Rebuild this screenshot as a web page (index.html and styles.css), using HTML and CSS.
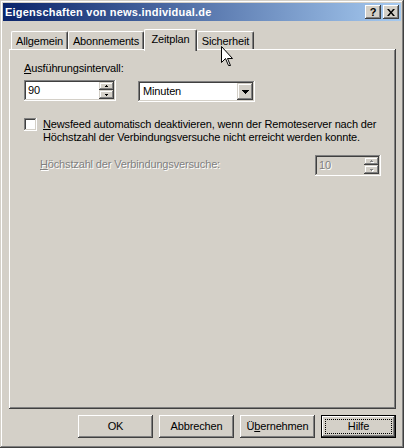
FILE: index.html
```html
<!DOCTYPE html>
<html lang="de">
<head>
    <meta charset="UTF-8">
    <title>Eigenschaften von news.individual.de</title>
    <link rel="stylesheet" href="styles.css">
</head>
<body>
    <div class="window">
        <div class="titlebar">
            <span class="title">Eigenschaften von news.individual.de</span>
            <div class="caption-buttons">
                <div class="caption-btn">?</div>
                <div class="caption-btn">
                    <svg width="8" height="7" viewBox="0 0 8 7"><path d="M0 0h2l2 2.5 2-2.5h2l-3 3.5 3 3.5h-2l-2-2.5-2 2.5h-2l3-3.5z"/></svg>
                </div>
            </div>
        </div>
        <div class="dialog">
            <div class="tabs">
                <div class="tab tab-general">Allgemein</div>
                <div class="tab tab-subs">Abonnements</div>
                <div class="tab tab-schedule tab-active">Zeitplan</div>
                <div class="tab tab-security">Sicherheit</div>
            </div>
            <div class="panel">
                <div class="label"><u>A</u>usführungsintervall:</div>
                <div class="interval-row">
                    <div class="spin spin-interval">
                        <span class="spin-value">90</span>
                        <div class="spin-buttons">
                            <div class="spin-btn spin-up"><svg width="3" height="2" viewBox="0 0 3 2"><path d="M1 0h1v1h1v1H0V1h1z"/></svg></div>
                            <div class="spin-btn spin-down"><svg width="3" height="2" viewBox="0 0 3 2"><path d="M0 0h3v1H2v1H1V1H0z"/></svg></div>
                        </div>
                    </div>
                    <div class="combo">
                        <span class="combo-value">Minuten</span>
                        <div class="combo-btn"><svg width="7" height="4" viewBox="0 0 7 4"><path d="M0 0h7v1H6v1H5v1H4v1H3V3H2V2H1V1H0z"/></svg></div>
                    </div>
                </div>
                <div class="check-row">
                    <div class="checkbox"></div>
                    <div class="check-label"><u>N</u>ewsfeed automatisch deaktivieren, wenn der Remoteserver nach der<br>Höchstzahl der Verbindungsversuche nicht erreicht werden konnte.</div>
                </div>
                <div class="retry-row">
                    <div class="retry-label disabled"><u>H</u>öchstzahl der Verbindungsversuche:</div>
                    <div class="spin spin-retry">
                        <span class="spin-value disabled">10</span>
                        <div class="spin-buttons">
                            <div class="spin-btn spin-up"><svg class="arrow-disabled" width="3" height="2" viewBox="0 0 3 2"><path d="M1 0h1v1h1v1H0V1h1z"/></svg></div>
                            <div class="spin-btn spin-down"><svg class="arrow-disabled" width="3" height="2" viewBox="0 0 3 2"><path d="M0 0h3v1H2v1H1V1H0z"/></svg></div>
                        </div>
                    </div>
                </div>
            </div>
            <div class="buttons">
                <button class="button">OK</button>
                <button class="button">Abbrechen</button>
                <button class="button">Ü<u>b</u>ernehmen</button>
                <button class="button button-default"><span class="focus">Hilfe</span></button>
            </div>
        </div>
        <svg class="cursor" width="13" height="21" viewBox="0 0 13 21">
            <path d="M0.5 0.5V16.5L4.5 12.5L7.5 19.5H9.5L6.5 12.5H11.5Z" fill="#fff" stroke="#000" stroke-linejoin="miter"/>
        </svg>
    </div>
</body>
</html>
```

FILE: styles.css
```css
body {
    margin: 0;
    background-color: #d4d0c8;
    font-family: "Liberation Sans", Arial, sans-serif;
    font-size: 11px;
    line-height: 13px;
    letter-spacing: -0.15px;
    color: #000;
}
.window {
    position: relative;
    width: 404px;
    height: 448px;
    box-sizing: border-box;
    padding: 3px;
    display: flex;
    flex-direction: column;
    background-color: #d4d0c8;
    box-shadow: inset -1px -1px #404040, inset 1px 1px #d4d0c8, inset -2px -2px #808080, inset 2px 2px #fff;
}
.titlebar {
    height: 18px;
    display: flex;
    align-items: flex-start;
    background: linear-gradient(to right, #0a246a, #a6caf0);
}
.title {
    flex: 1;
    padding: 1px 0 0 2px;
    line-height: 17px;
    font-weight: bold;
    letter-spacing: 0.22px;
    color: #fff;
    white-space: nowrap;
}
.caption-buttons {
    display: flex;
    gap: 2px;
    margin: 2px 2px 0 0;
}
.caption-btn {
    width: 16px;
    height: 14px;
    display: flex;
    align-items: center;
    justify-content: center;
    background-color: #d4d0c8;
    font-weight: bold;
    line-height: 14px;
    box-shadow: inset -1px -1px #404040, inset 1px 1px #fff, inset -2px -2px #808080, inset 2px 2px #d4d0c8;
}
.dialog {
    flex: 1;
    display: flex;
    flex-direction: column;
    padding: 8px 5px 7px 6px;
}
.tabs {
    display: flex;
    align-items: flex-end;
    height: 20px;
    padding-left: 2px;
}
.tab {
    height: 18px;
    box-sizing: border-box;
    padding-top: 3px;
    text-align: center;
    white-space: nowrap;
    background-color: #d4d0c8;
    border-top: 1px solid #fff;
    border-left: 1px solid #fff;
    border-right: 1px solid #404040;
    border-radius: 2px 2px 0 0;
    box-shadow: inset -1px 0 #808080;
}
.tab-general { width: 57px; }
.tab-subs { width: 76px; }
.tab-schedule { width: 53px; }
.tab-security { width: 57px; }
.tab-active {
    height: 22px;
    margin-bottom: -2px;
    position: relative;
    z-index: 1;
}
.panel {
    flex: 1;
    padding: 13px 15px 0 15px;
    box-shadow: inset -1px -1px #404040, inset 1px 1px #fff, inset -2px -2px #808080, inset 2px 2px #d4d0c8;
}
.interval-row {
    display: flex;
    align-items: flex-start;
    margin-top: 5px;
}
.spin {
    display: flex;
    box-sizing: border-box;
    height: 21px;
    padding: 2px;
    background-color: #fff;
    box-shadow: inset -1px -1px #fff, inset 1px 1px #808080, inset -2px -2px #d4d0c8, inset 2px 2px #404040;
}
.spin-interval {
    width: 92px;
}
.spin-value {
    flex: 1;
    padding: 2px 0 0 2px;
}
.spin-buttons {
    display: flex;
    flex-direction: column;
    width: 15px;
}
.spin-btn {
    display: flex;
    align-items: center;
    justify-content: center;
    background-color: #d4d0c8;
    box-shadow: inset -1px -1px #404040, inset 1px 1px #d4d0c8, inset -2px -2px #808080, inset 2px 2px #fff;
}
.spin-up { height: 8px; }
.spin-down { height: 9px; }
.combo {
    display: flex;
    box-sizing: border-box;
    width: 117px;
    height: 21px;
    margin: 1px 0 0 22px;
    padding: 2px;
    background-color: #fff;
    box-shadow: inset -1px -1px #fff, inset 1px 1px #808080, inset -2px -2px #d4d0c8, inset 2px 2px #404040;
}
.combo-value {
    flex: 1;
    padding: 2px 0 0 3px;
}
.combo-btn {
    width: 16px;
    display: flex;
    align-items: center;
    justify-content: center;
    background-color: #d4d0c8;
    box-shadow: inset -1px -1px #404040, inset 1px 1px #d4d0c8, inset -2px -2px #808080, inset 2px 2px #fff;
}
.check-row {
    display: flex;
    align-items: flex-start;
    margin-top: 16px;
}
.checkbox {
    width: 13px;
    height: 13px;
    margin-right: 6px;
    flex-shrink: 0;
    background-color: #fff;
    box-shadow: inset -1px -1px #fff, inset 1px 1px #808080, inset -2px -2px #d4d0c8, inset 2px 2px #404040;
}
.check-label {
    white-space: nowrap;
}
.retry-row {
    display: flex;
    align-items: flex-start;
    margin-top: 11px;
    padding-left: 16px;
}
.retry-label {
    margin-top: 3px;
}
.spin-retry {
    width: 66px;
    margin-left: auto;
    background-color: #d4d0c8;
}
.disabled {
    color: #808080;
    text-shadow: 1px 1px 0 #fff;
}
.arrow-disabled {
    fill: #808080;
    filter: drop-shadow(1px 1px 0 #fff);
}
.buttons {
    display: flex;
    justify-content: flex-end;
    gap: 6px;
    margin-top: 6px;
}
.button {
    width: 75px;
    height: 23px;
    padding: 0;
    border: none;
    background-color: #d4d0c8;
    font: inherit;
    letter-spacing: inherit;
    color: #000;
    box-shadow: inset -1px -1px #404040, inset 1px 1px #fff, inset -2px -2px #808080, inset 2px 2px #d4d0c8;
}
.button-default {
    display: flex;
    padding: 3px;
    border: 1px solid #000;
}
.focus {
    flex: 1;
    display: flex;
    align-items: center;
    justify-content: center;
    border: 1px dotted #000;
}
.cursor {
    position: absolute;
    left: 221px;
    top: 46px;
}
```
